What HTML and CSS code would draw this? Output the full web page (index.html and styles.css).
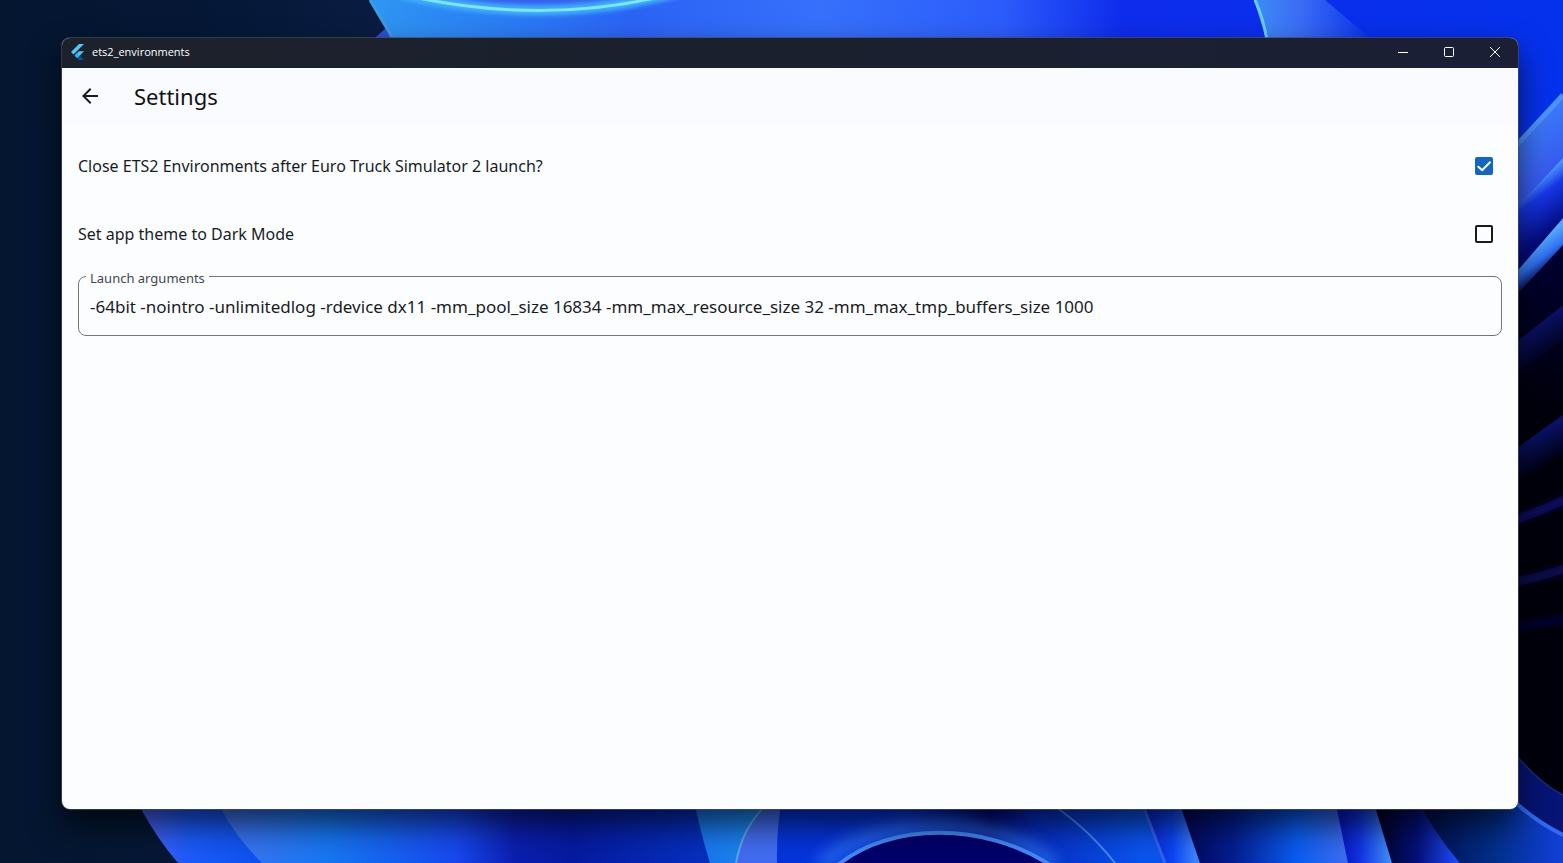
FILE: index.html
```html
<!DOCTYPE html>
<html lang="en">
<head>
<meta charset="utf-8">
<meta name="viewport" content="width=device-width, initial-scale=1">
<title>ets2_environments</title>
<link rel="stylesheet" href="styles.css">
</head>
<body>
<svg class="wallpaper" viewBox="0 0 1563 863" preserveAspectRatio="none" aria-hidden="true">
  <defs>
    <linearGradient id="night"><stop offset="0" stop-color="#041630"/><stop offset=".12" stop-color="#051735"/><stop offset=".25" stop-color="#0a1c42"/></linearGradient>
    <linearGradient id="top" gradientUnits="userSpaceOnUse" x1="370" y1="0" x2="1563" y2="0"><stop offset="0" stop-color="#2f96f2"/><stop offset=".08" stop-color="#2b84f4"/><stop offset=".22" stop-color="#2b63f5"/><stop offset=".38" stop-color="#3670fb"/><stop offset=".53" stop-color="#2c5cfb"/><stop offset=".63" stop-color="#0e2cec"/><stop offset="1" stop-color="#0431ec"/></linearGradient>
    <linearGradient id="petal"><stop offset="0" stop-color="#3d8df5"/><stop offset=".4" stop-color="#3a6cf6"/><stop offset="1" stop-color="#0b34ea"/></linearGradient>
    <linearGradient id="band" gradientUnits="userSpaceOnUse" x1="1525" y1="125" x2="1560" y2="165"><stop offset="0" stop-color="#3d7dfa"/><stop offset="1" stop-color="#3659ef"/></linearGradient>
    <linearGradient id="deep" gradientUnits="userSpaceOnUse" x1="1530" y1="185" x2="1560" y2="225"><stop offset="0" stop-color="#4c96fb"/><stop offset=".3" stop-color="#1637e8"/><stop offset="1" stop-color="#030b7c"/></linearGradient>
    <linearGradient id="streak" gradientUnits="userSpaceOnUse" x1="1535" y1="245" x2="1553" y2="268"><stop offset="0" stop-color="#57a8fc"/><stop offset=".5" stop-color="#2f70f4"/><stop offset="1" stop-color="#02023a"/></linearGradient>
    <linearGradient id="dim" gradientUnits="userSpaceOnUse" x1="1535" y1="325" x2="1555" y2="353"><stop offset="0" stop-color="#0a1268"/><stop offset="1" stop-color="#000018"/></linearGradient>
    <linearGradient id="dim2" gradientUnits="userSpaceOnUse" x1="1540" y1="431" x2="1558" y2="460"><stop offset="0" stop-color="#0a1268"/><stop offset="1" stop-color="#00000e"/></linearGradient>
    <linearGradient id="void" x1="0" y1="0" x2="0" y2="1"><stop offset="0" stop-color="#00003a"/><stop offset=".3" stop-color="#00000c"/><stop offset="1" stop-color="#00000c"/></linearGradient>
    <linearGradient id="low1" gradientUnits="userSpaceOnUse" x1="141" y1="0" x2="260" y2="0"><stop offset="0" stop-color="#4d60f0"/><stop offset=".4" stop-color="#1b5bfa"/><stop offset="1" stop-color="#0e50ef"/></linearGradient>
    <linearGradient id="low2" gradientUnits="userSpaceOnUse" x1="221" y1="0" x2="710" y2="0"><stop offset="0" stop-color="#4272ef"/><stop offset=".22" stop-color="#1677f2"/><stop offset=".48" stop-color="#1748ef"/><stop offset=".6" stop-color="#0b1fb0"/><stop offset=".72" stop-color="#061aa0"/><stop offset="1" stop-color="#0530c0"/></linearGradient>
    <linearGradient id="low3"><stop offset="0" stop-color="#1a73ed"/><stop offset="1" stop-color="#188ff0"/></linearGradient>
    <linearGradient id="low4" gradientUnits="userSpaceOnUse" x1="777" y1="0" x2="1143" y2="0"><stop offset="0" stop-color="#0534dc"/><stop offset=".35" stop-color="#0632d8"/><stop offset=".58" stop-color="#02067a"/><stop offset=".7" stop-color="#062bc0"/><stop offset="1" stop-color="#0a54ee"/></linearGradient>
    <linearGradient id="low5" gradientUnits="userSpaceOnUse" x1="1150" y1="0" x2="1195" y2="0"><stop offset="0" stop-color="#0b28d0"/><stop offset=".5" stop-color="#0b45f4"/><stop offset="1" stop-color="#3c80fa"/></linearGradient>
    <linearGradient id="low6" gradientUnits="userSpaceOnUse" x1="1185" y1="0" x2="1345" y2="0"><stop offset="0" stop-color="#020758"/><stop offset=".3" stop-color="#041d90"/><stop offset=".7" stop-color="#0a5cf0"/><stop offset="1" stop-color="#3b6cf0"/></linearGradient>
    <linearGradient id="low7" gradientUnits="userSpaceOnUse" x1="1342" y1="0" x2="1390" y2="0"><stop offset="0" stop-color="#0718c4"/><stop offset=".4" stop-color="#1236e4"/><stop offset="1" stop-color="#3f8cfa"/></linearGradient>
    <linearGradient id="low8" gradientUnits="userSpaceOnUse" x1="1380" y1="0" x2="1455" y2="0"><stop offset="0" stop-color="#010328"/><stop offset=".5" stop-color="#04107a"/><stop offset="1" stop-color="#1c48f0"/></linearGradient>
    <linearGradient id="low9" gradientUnits="userSpaceOnUse" x1="1430" y1="0" x2="1563" y2="0"><stop offset="0" stop-color="#011050"/><stop offset=".5" stop-color="#02308e"/><stop offset="1" stop-color="#123fd8"/></linearGradient>
    <filter id="soft" x="-20%" y="-50%" width="140%" height="200%"><feGaussianBlur stdDeviation="2"/></filter>
    <filter id="glow" x="-20%" y="-50%" width="140%" height="200%"><feGaussianBlur stdDeviation="7"/></filter>
  </defs>
  <rect width="1563" height="863" fill="url(#night)"/>
  <path d="M350 60L386 28L420 60Z" fill="#2d4fd0"/>
  <path d="M370 0H1563V400H600L392 37Z" fill="url(#top)"/>
  <path d="M370 0L392 37" stroke="#3d9de0" stroke-width="3"/>
  <path d="M400 -6Q545 28 680 -8" fill="#3562f0" stroke="#3fb0fa" stroke-width="10" filter="url(#soft)"/>
  <path d="M400 -6Q545 28 680 -8" fill="none" stroke="#7ee4ff" stroke-width="3"/>
  <path d="M1254 0L1266 38H1370L1325 0Z" fill="url(#petal)"/>
  <path d="M1255 0Q1263 18 1267 40" fill="none" stroke="#6ccdf4" stroke-width="3"/>

  <path d="M1500 163L1563 95V863H1500Z" fill="url(#band)"/>
  <path d="M1500 163L1563 95" stroke="#4c94fb" stroke-width="5"/>
  <path d="M1500 225L1563 158V863H1500Z" fill="url(#deep)"/>
  <path d="M1500 291L1563 218V863H1500Z" fill="url(#void)"/>
  <path d="M1500 291L1563 218V245L1500 313Z" fill="url(#streak)"/>
  <path d="M1500 355L1563 305V340L1500 385Z" fill="url(#dim)"/>
  <path d="M1500 460L1563 415V455L1500 490Z" fill="url(#dim2)"/>
  <g fill="none" stroke="#0a0d5e" stroke-width="9" filter="url(#soft)">
    <path d="M1500 525Q1540 512 1575 495"/><path d="M1500 585Q1540 578 1575 565" opacity=".8"/><path d="M1500 632L1575 616" opacity=".4"/>
  </g>
  <path d="M1500 735Q1535 782 1563 795V863H1500Z" fill="#061475"/>
  <path d="M1500 735Q1535 782 1563 795" fill="none" stroke="#132777" stroke-width="2"/>

  <path d="M120 775L141 809Q158 840 178 863H300V775Z" fill="url(#low1)"/>
  <path d="M205 775L221 809Q239 841 262 863H720V775Z" fill="url(#low2)"/>
  <path d="M690 780Q698 825 710 863H790V780Z" fill="url(#low3)"/>
  <path d="M790 790Q748 812 735 863H800Z" fill="#416cef"/>
  <path d="M775 798Q744 820 736 863" fill="none" stroke="#5da7ee" stroke-width="2"/>
  <path d="M784 790Q776 825 777 863H1180V790Z" fill="url(#low4)"/>
  <path d="M820 866C875 813 1000 812 1055 866" fill="none" stroke="#327df0" stroke-width="16" opacity=".6" filter="url(#glow)"/>
  <path d="M838 865C890 822 985 822 1050 865Z" fill="#00006b"/>
  <path d="M838 865C890 822 985 822 1050 865" fill="none" stroke="#4389f4" stroke-width="4"/>
  <path d="M1045 800Q1085 825 1115 863" fill="none" stroke="#438af2" stroke-width="2"/>
  <path d="M1135 790L1165 863H1215L1175 790Z" fill="url(#low5)"/>
  <path d="M1137 790L1165 863" stroke="#2f62f0" stroke-width="3"/>
  <path d="M1175 790L1200 863H1360L1333 790Z" fill="url(#low6)"/>
  <path d="M1333 790L1348 863H1400L1370 790Z" fill="url(#low7)"/>
  <path d="M1370 790L1392 863H1480L1415 790Z" fill="url(#low8)"/>
  <path d="M1412 790Q1433 832 1460 863H1563V835Q1535 821 1515 802Z" fill="url(#low9)"/>
  <path d="M1515 802Q1535 821 1563 835" fill="none" stroke="#3169f2" stroke-width="4"/>
</svg>

<main class="window">
  <header class="titlebar">
    <svg class="logo" viewBox="0 0 13 16" aria-hidden="true"><path fill="#54c5f8" d="M8 0H13L2.5 10.4L0 8Z"/><path fill="#54c5f8" d="M8 7.2H13L8.8 11.5L6.1 14L3.6 11.5Z"/><path fill="#01579b" d="M6.1 14L8.7 11.5L13 16H8Z"/><path fill="#29b6f6" d="M3.6 11.5L6.1 9L8.7 11.5L6.1 14Z"/></svg>
    <span class="caption">ets2_environments</span>
    <button class="control" type="button" aria-label="Minimize"><svg viewBox="0 0 10 10"><path d="M0 5.5H10"/></svg></button>
    <button class="control" type="button" aria-label="Maximize"><svg viewBox="0 0 10 10"><rect x=".5" y=".5" width="9" height="9" rx="1"/></svg></button>
    <button class="control" type="button" aria-label="Close"><svg viewBox="0 0 10 10"><path d="M0 0L10 10M10 0L0 10"/></svg></button>
  </header>
  <div class="appbar">
    <button class="back" type="button" aria-label="Back"><svg viewBox="0 0 24 24"><path d="M20 11H7.83l5.59-5.59L12 4l-8 8 8 8 1.41-1.41L7.83 13H20z"/></svg></button>
    <h1 class="title">Settings</h1>
  </div>
  <form class="settings">
    <div class="option">
      <label for="close-app">Close ETS2 Environments after Euro Truck Simulator 2 launch?</label>
      <span class="check"><input id="close-app" type="checkbox" checked><svg viewBox="0 0 18 18" aria-hidden="true"><path d="M2.7 9.2L7.2 13.2L15.5 4.7"/></svg></span>
    </div>
    <div class="option">
      <label for="dark-mode">Set app theme to Dark Mode</label>
      <span class="check"><input id="dark-mode" type="checkbox"><svg viewBox="0 0 18 18" aria-hidden="true"><path d="M2.7 9.2L7.2 13.2L15.5 4.7"/></svg></span>
    </div>
    <fieldset class="field">
      <legend><label for="arguments">Launch arguments</label></legend>
      <input id="arguments" type="text" spellcheck="false" value="-64bit -nointro -unlimitedlog -rdevice dx11 -mm_pool_size 16834 -mm_max_resource_size 32 -mm_max_tmp_buffers_size 1000">
    </fieldset>
  </form>
</main>
</body>
</html>
```
FILE: styles.css
```css
* { box-sizing: border-box; }

body {
  margin: 0;
  min-height: 100vh;
  display: flex;
  padding: 38px 45px 54px 62px;
  overflow: hidden;
  background: #041630;
  color: #191c1e;
  font-family: "Noto Sans", sans-serif;
  font-size: 16px;
  line-height: 24px;
}

.wallpaper {
  position: absolute;
  inset: 0;
  width: 100%;
  height: 100%;
}

.window {
  position: relative;
  flex: 1;
  display: flex;
  flex-direction: column;
  border-radius: 8px;
  overflow: hidden;
  background: #fcfdff;
  box-shadow: 0 0 0 1px rgba(70, 75, 90, 0.7), 0 16px 32px rgba(0, 0, 0, 0.65);
}

.titlebar {
  display: flex;
  align-items: center;
  height: 30px;
  padding: 0 0 2px 9px;
  background: linear-gradient(90deg, #1c212b, #1b2030 60%, #1b1f36);
  color: #fff;
}

.logo {
  width: 13px;
  height: 16px;
  margin-right: 8px;
}

.caption {
  flex: 1;
  font-family: "Open Sans", sans-serif;
  font-size: 11px;
  line-height: 16px;
}

.control {
  display: grid;
  place-items: center;
  width: 46px;
  height: 28px;
  padding: 0;
  border: 0;
  background: none;
}

.control svg {
  width: 10px;
  height: 10px;
  fill: none;
  stroke: #fff;
  overflow: visible;
}

.appbar {
  display: flex;
  align-items: center;
  height: 56px;
  padding: 0 16px;
  gap: 32px;
  background: #f9fbff;
}

.back {
  display: grid;
  padding: 0;
  border: 0;
  background: none;
}

.back svg {
  width: 24px;
  height: 24px;
  fill: #191c1e;
}

.title {
  margin: 0;
  color: #111;
  font-size: 22px;
  font-weight: 400;
  line-height: 28px;
}

.settings {
  display: flex;
  flex-direction: column;
  padding: 8px 16px;
}

.option {
  display: flex;
  align-items: center;
  justify-content: space-between;
  height: 68px;
}

.check {
  display: grid;
  margin-right: 9px;
}

.check input,
.check svg {
  grid-area: 1 / 1;
  width: 18px;
  height: 18px;
}

.check input {
  appearance: none;
  margin: 0;
  border: 2px solid #191c1e;
  border-radius: 2px;
}

.check input:checked {
  border-color: #1565c0;
  background: #1565c0;
}

.check svg {
  fill: none;
  stroke: #fff;
  stroke-width: 2;
  visibility: hidden;
  pointer-events: none;
}

.check input:checked + svg { visibility: visible; }

.field {
  min-width: 0;
  height: 70px;
  margin: -2px 0 0;
  padding: 0 11px;
  border: 1px solid #74777a;
  border-radius: 8px;
}

.field legend {
  margin-left: -4px;
  padding: 4px 4px 0;
  color: #43474e;
  font-size: 13px;
  line-height: 16px;
}

.field input {
  display: block;
  width: 100%;
  height: 40px;
  padding: 0;
  border: 0;
  outline: 0;
  background: none;
  color: inherit;
  font: inherit;
  font-size: 17px;
}
```
